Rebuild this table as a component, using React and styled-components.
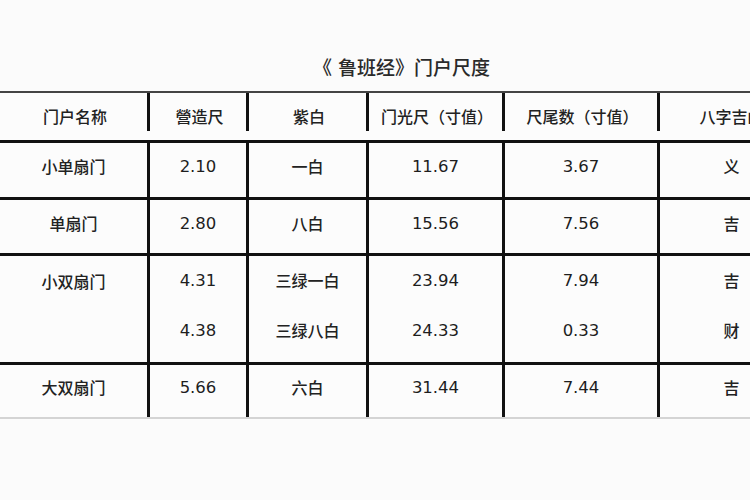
import React from 'react';
import styled, { createGlobalStyle } from 'styled-components';

const GlobalStyle = createGlobalStyle`
  html, body {
    margin: 0;
    padding: 0;
    background: #fbfbfb;
  }
`;

const Page = styled.div`
  width: 750px;
  height: 500px;
  overflow: hidden;
  background: #fbfbfb;
  font-family: "DejaVu Sans", "Noto Sans CJK SC", sans-serif;
  color: #222;
`;

const Sheet = styled.div`
  width: 803px;
  padding-top: 56px;
  display: flex;
  flex-direction: column;
  align-items: stretch;
`;

const Title = styled.div`
  height: 24px;
  line-height: 24px;
  text-align: center;
  font-size: 19px;
  font-weight: 500;
  color: #2a2a2a;
  margin-bottom: 11px;
`;

const Grid = styled.div`
  display: grid;
  grid-template-columns: 150px 99px 120px 136px 155px 143px;
  grid-template-rows: 50px 57px 56px 109px 52px;
  border-top: 2px solid #444;
  border-bottom: 2px solid #d4d4d4;
  background: #fcfcfc;
`;

const Cell = styled.div`
  box-sizing: border-box;
  display: flex;
  flex-direction: column;
  align-items: center;
  justify-content: ${(p) => (p.$top ? 'flex-start' : 'center')};
  text-align: center;
  font-family: ${(p) => (p.$num ? '"DejaVu Sans", sans-serif' : '"Noto Sans CJK SC", sans-serif')};
  font-size: ${(p) => (p.$num ? '16.5px' : '16px')};
  font-weight: ${(p) => (p.$num ? 400 : 500)};
  color: ${(p) => (p.$num ? '#1e1e1e' : '#222')};
  line-height: ${(p) => (p.$tall ? '50px' : '22px')};
  padding-bottom: ${(p) => (p.$num ? '6px' : '8px')};
  border-right: ${(p) => (p.$last ? 'none' : '3px solid #111')};
  border-bottom: ${(p) => (p.$end ? 'none' : '3px solid #111')};
`;

const HeadCell = styled.div`
  box-sizing: border-box;
  position: relative;
  display: flex;
  justify-content: center;
  align-items: center;
  font-family: "Noto Sans CJK SC", sans-serif;
  font-size: 16px;
  font-weight: 500;
  padding-bottom: 2px;
  border-bottom: 3px solid #111;

  &::after {
    content: '';
    display: ${(p) => (p.$last ? 'none' : 'block')};
    position: absolute;
    top: 0;
    right: 0;
    bottom: 9px;
    width: 3px;
    background: #111;
  }
`;

const Sub = styled.span`
  display: block;
`;

const Below = styled.div`
  flex: 1;
  height: 90px;
  background: #f7f7f7;
`;

const headers = ['门户名称', '營造尺', '紫白', '门光尺（寸值）', '尺尾数（寸值）', '八字吉凶'];

const rows = [
  ['小单扇门', ['2.10'], ['一白'], ['11.67'], ['3.67'], ['义']],
  ['单扇门', ['2.80'], ['八白'], ['15.56'], ['7.56'], ['吉']],
  ['小双扇门', ['4.31', '4.38'], ['三绿一白', '三绿八白'], ['23.94', '24.33'], ['7.94', '0.33'], ['吉', '财']],
  ['大双扇门', ['5.66'], ['六白'], ['31.44'], ['7.44'], ['吉']],
];

export default function App() {
  return (
    <Page>
      <GlobalStyle />
      <Sheet>
        <Title>《 鲁班经》门户尺度</Title>
        <Grid>
          {headers.map((h, i) => (
            <HeadCell key={h} $last={i === headers.length - 1}>
              {h}
            </HeadCell>
          ))}
          {rows.map((row, r) => {
            const end = r === rows.length - 1;
            const tall = row[1].length > 1;
            return (
              <React.Fragment key={row[0]}>
                <Cell $end={end} $top={tall} $tall={tall}>
                  {row[0]}
                </Cell>
                {row.slice(1).map((vals, c) => (
                  <Cell
                    key={c}
                    $end={end}
                    $tall={tall}
                    $num={c !== 1 && c !== 4}
                    $last={c === 4}
                  >
                    {vals.map((v) => (
                      <Sub key={v}>{v}</Sub>
                    ))}
                  </Cell>
                ))}
              </React.Fragment>
            );
          })}
        </Grid>
        <Below />
      </Sheet>
    </Page>
  );
}
